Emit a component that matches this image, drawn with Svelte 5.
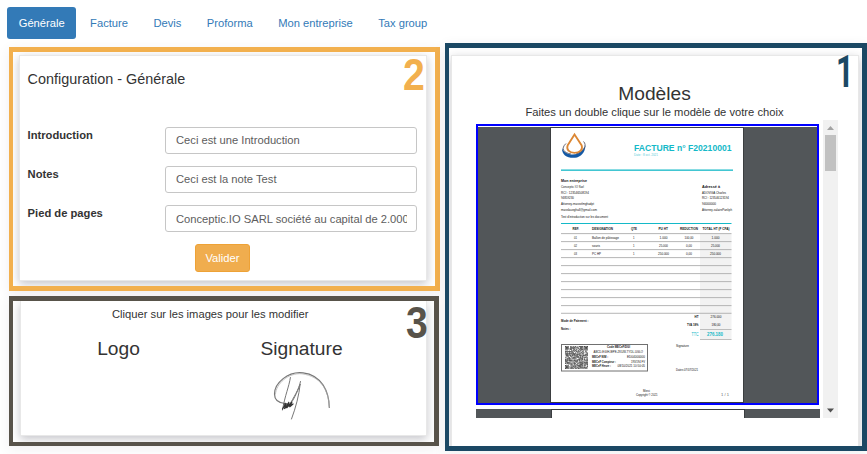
<script>
  const tabs = ['Générale', 'Facture', 'Devis', 'Proforma', 'Mon entreprise', 'Tax group'];
  const fields = [
    { label: 'Introduction', value: 'Ceci est une Introduction' },
    { label: 'Notes', value: 'Ceci est la note Test' },
    { label: 'Pied de pages', value: 'Conceptic.IO SARL société au capital de 2.000' }
  ];

  const teal = '#14b9c8';
  // x, baseline, rendered length, size, text, weight, color
  const texts = [
    [634, 151, 97.5, 9.6, 'FACTURE n° F20210001', 'b', teal],
    [634, 156.3, 24, 3.1, 'Date : 8 oct. 2021', '', '#5ccdd7'],
    [561, 182, 26, 3.9, 'Mon entreprise', 'b'],
    [561, 187.9, 23, 3.4, 'Conceptic IO Sarl'],
    [561, 194, 28, 3.4, 'RCI : 123546508194'],
    [561, 199, 13, 3.4, '94859230'],
    [561, 205.2, 33, 3.4, 'Attorney-masselmghadpt'],
    [561, 211, 36, 3.4, 'masslaueghall@gmail.com'],
    [561, 218, 47, 3.4, "Test d'introduction sur les document"],
    [702, 188, 18, 3.9, 'Adressé à', 'b'],
    [702, 193.5, 24, 3.4, 'ADOVIGA Charles'],
    [702, 199, 27, 3.4, 'RCI : 123546123194'],
    [702, 205.2, 14, 3.4, '94000000'],
    [702, 211, 30, 3.4, 'Attorney-salairePanliph'],
    [572.5, 230.2, 6.5, 3.4, 'REF.', 'b'],
    [592, 230.2, 21, 3.4, 'DESIGNATION', 'b'],
    [631, 230.2, 6, 3.4, 'QTE', 'b'],
    [658.5, 230.2, 9.5, 3.4, 'PU HT', 'b'],
    [680, 230.2, 18, 3.4, 'REDUCTION', 'b'],
    [702.5, 230.2, 27, 3.4, 'TOTAL HT (F CFA)', 'b'],
    [574, 239, 3, 3.2, '01'],
    [592, 239, 27, 3.2, 'Ballon de pâtissage'],
    [633, 239, 1.5, 3.2, '1'],
    [659.5, 239, 8, 3.2, '1.000'],
    [684.5, 239, 9, 3.2, '100,00'],
    [711.5, 239, 8, 3.2, '1.000'],
    [574, 247, 3, 3.2, '02'],
    [592, 247, 8, 3.2, 'souris'],
    [633, 247, 1.5, 3.2, '1'],
    [659, 247, 9, 3.2, '25.000'],
    [686, 247, 6, 3.2, '0,00'],
    [711, 247, 9, 3.2, '25.000'],
    [574, 255, 3, 3.2, '03'],
    [592, 255, 9, 3.2, 'PC HP'],
    [633, 255, 1.5, 3.2, '1'],
    [658, 255, 11, 3.2, '250.000'],
    [686, 255, 6, 3.2, '0,00'],
    [710, 255, 11, 3.2, '250.000'],
    [694.5, 318.1, 4, 3.2, 'HT', 'b'],
    [710.5, 318.1, 11, 3.2, '276.000'],
    [687, 326.1, 11.5, 3.2, 'TVA 18%', 'b'],
    [711.5, 326.1, 9, 3.2, '180,00'],
    [691.5, 336, 7, 4.8, 'TTC', '', teal],
    [707, 336, 16, 4.8, '276.180', 'b', teal],
    [561, 322, 27.5, 3.3, 'Mode de Paiement :', 'b'],
    [561, 330, 9.5, 3.3, 'Notes :', 'b'],
    [607, 348.2, 23, 3.1, 'Code MECeF/DGI', 'b'],
    [593.5, 353.3, 49.5, 3, 'ABCD-EGIH-IEPE-ZKUW-TYDL-UGLO'],
    [592, 358.2, 16, 3.1, 'MECeF NIM :', 'b'],
    [627, 358.2, 18, 3.1, 'ED04000000'],
    [592, 362.8, 24, 3.1, 'MECeF Compteur :', 'b'],
    [631, 362.8, 14, 3.1, '193/194 FV'],
    [592, 367.2, 19, 3.1, 'MECeF Heure :', 'b'],
    [617.5, 367.2, 27.5, 3.1, '08/10/2021 10:50:05'],
    [676, 347, 13, 3.2, 'Signature'],
    [676, 371, 22, 3.2, 'Dates 07/07/2021'],
    [643, 392, 7, 3.2, 'Merci'],
    [636, 396.2, 21.5, 3.2, 'Copyright © 2021'],
    [721, 396.2, 8, 4.3, '1 / 1', '', '#666']
  ];
  const rowLines = Array.from({ length: 10 }, (_, i) => 233.2 + i * 8).concat(312.8);

  // Dense speckle of the QR code
  const N = 41;
  const modules = [];
  let seed = 17;
  for (let r = 0; r < N; r++) {
    for (let c = 0; c < N; c++) {
      seed = (seed * 1103515245 + 12345) % 2147483648;
      const top = r < 8 && (c < 8 || c >= N - 8);
      const bottom = r >= N - 8 && c < 8;
      if (!top && !bottom && seed / 2147483648 > 0.4) modules.push([c, r]);
    }
  }
  const finders = [[0, 0], [N - 7, 0], [0, N - 7]];
</script>

<div class="page">
  <nav>
    {#each tabs as tab, i}
      <a class:active={i === 0} href="#tab{i}">{tab}</a>
    {/each}
  </nav>
  <div class="columns">
    <div class="left">
      <section class="frame general">
        <div class="card">
          <h2>Configuration - Générale</h2>
          <form>
            {#each fields as f}
              <div class="row">
                <span class="label">{f.label}</span>
                <div class="input"><span>{f.value}</span></div>
              </div>
            {/each}
            <button type="button">Valider</button>
          </form>
        </div>
        <b class="num n2">2</b>
      </section>
      <section class="frame images">
        <div class="card">
          <p>Cliquer sur les images pour les modifier</p>
          <div class="pair">
            <div><h3>Logo</h3></div>
            <div>
              <h3>Signature</h3>
              <svg class="sign" width="64" height="54" viewBox="270 367 64 54" fill="none" stroke-linecap="round">
                <path d="M329.300 406.500C329 391 322 374 303 371.800C288 370 274.500 382 274.500 393C274.500 399 279 402 285 402.500" stroke="#777" stroke-width="1.200" />
                <path d="M329.300 406C328.700 389 321 375.500 302 372.800C288 371.500 276 383 275.500 393" stroke="#aaa" stroke-width=".7" />
                <path d="M290.400 376.500C289 386 285 394 282.500 409" stroke="#777" stroke-width="1" />
                <path d="M300.500 380.500C299 389 293 397 289.500 404C293 400 297 392 300.200 383C299 394 296 406 291.500 418" stroke="#777" stroke-width="1" />
                <path d="M282.500 408L286 402L284.500 408L289 401L286.500 407L292 401L289.500 406L293 403M284 403L291 403" stroke="#333" stroke-width="1.200" />
              </svg>
            </div>
          </div>
        </div>
        <b class="num n3">3</b>
      </section>
    </div>
    <section class="frame models">
      <div class="card">
        <h3>Modèles</h3>
        <p>Faites un double clique sur le modèle de votre choix</p>
        <div class="viewer">
          <div class="list">
            <div class="selected">
              <svg width="339" height="276" viewBox="478 127 339 276">
                <rect x="478" y="127" width="339" height="276" fill="#525659" />
                <rect x="550" y="127" width="194" height="276" fill="#3b3e40" />
                <rect x="551" y="128" width="192" height="274" fill="#fff" />
                <path d="M562 148C561.500 156 569 159 577 157.500C583 155.500 585.500 150 585.500 145C583 151.500 578 154.500 573 154.500C567.500 154.500 563.500 152 562 148Z" fill="#1459a5" />
                <path d="M566 143.500C560.500 148.500 563.500 152.800 571 154M583.500 141.500C587.500 145 583.500 152 576 154" fill="none" stroke="#5b5a66" stroke-width=".9" />
                <path d="M574.500 134.500L567.600 145.500C566.300 149.500 569 152.800 574.500 152.800C580 152.800 583 149.500 581.700 145.500Z" fill="#fff" stroke="#dc8734" stroke-width="1.800" />
                <rect x="561" y="169.500" width="172" height="1.300" fill={teal} />
                <rect x="561" y="223" width="170.500" height="1" fill={teal} />
                <rect x="700" y="234" width="31.500" height="106" fill="#f2f2f2" />
                {#each rowLines as y}
                  <rect x="561" {y} width="170.500" height=".9" fill="#adadad" />
                {/each}
                <rect x="700" y="329" width="31.500" height=".8" fill="#b0b0b0" />
                <rect x="700" y="339" width="31.500" height=".8" fill="#b0b0b0" />
                <rect x="561.500" y="344.500" width="86" height="26.500" fill="#fff" stroke="#707070" />
                <g transform="translate(565 346) scale({23 / N})" fill="#111">
                  {#each modules as [x, y]}
                    <rect {x} {y} width="1" height="1" />
                  {/each}
                  {#each finders as [x, y]}
                    <rect x={x + 0.5} y={y + 0.5} width="6" height="6" fill="none" stroke="#222" />
                    <rect x={x + 2} y={y + 2} width="3" height="3" />
                  {/each}
                </g>
                {#each texts as [x, y, len, size, t, w, color]}
                  <text {x} {y} textLength={len} lengthAdjust="spacingAndGlyphs" font-size={size} font-weight={w ? 700 : 400} fill={color ?? '#111'}>{t}</text>
                {/each}
              </svg>
            </div>
            <div class="next"><div class="sheet"></div></div>
          </div>
          <div class="scroll">
            <svg width="15" height="15" viewBox="0 0 15 15"><path d="M4 10L7.500 6L11 10Z" fill="#a3a3a3" /></svg>
            <div class="thumb"></div>
            <svg width="15" height="15" viewBox="0 0 15 15"><path d="M4 5.500L7.500 9.500L11 5.500Z" fill="#505050" /></svg>
          </div>
        </div>
      </div>
      <b class="num n1">1</b>
    </section>
  </div>
</div>

<style>
  :global(body) { background: #fff; }
  * { box-sizing: border-box; }
  .page {
    width: 867px; height: 454px; overflow: hidden;
    font: 11.2px/16px "Liberation Sans", Arial, sans-serif; color: #333;
  }
  nav { display: flex; gap: 2px; height: 43px; padding: 7px 0 0 7px; }
  nav a { height: 32px; padding: 0 11.7px; line-height: 32px; border-radius: 3px; color: #337ab7; text-decoration: none; white-space: nowrap; }
  nav a.active { background: #337ab7; color: #fff; }
  .columns { display: flex; gap: 5px; padding-left: 9px; align-items: flex-start; }
  .left { width: 431px; display: flex; flex-direction: column; gap: 5px; padding-top: 4px; }
  .frame { position: relative; overflow: hidden; border: 5px solid; border-left-width: 4px; box-shadow: 0 3px 12px rgba(60, 50, 80, .08); }
  .card { background: #fff; border: 1px solid #e8e8e8; box-shadow: 0 3px 9px rgba(40, 40, 60, .27); }
  .general { height: 244px; padding: 3px 8px 0 6px; border-color: #f2b04e; }
  .general .card { height: 226px; padding: 15px 9px 0 7.6px; }
  h2 { margin: 0; font-size: 14.4px; line-height: 17px; font-weight: 400; white-space: nowrap; }
  form { display: flex; flex-direction: column; gap: 12px; padding-top: 39px; }
  .row { display: flex; height: 27px; }
  .label { flex: none; width: 137.400px; font-weight: 700; }
  .input { flex: 1; min-width: 0; height: 27px; padding: 0 9px 0 10px; border: 1px solid #c6c6c6; border-radius: 3px; color: #5d5d5d; line-height: 24px; }
  .row:nth-child(3) .input { line-height: 26px; }
  .input span { display: block; overflow: hidden; white-space: nowrap; }
  button { align-self: flex-start; width: 55px; height: 28px; margin-left: 167.400px; padding: 0; font: inherit; color: #fff; background: #f0ad4e; border: 1px solid #eea236; border-radius: 3px; }
  .images { width: 430px; height: 150px; padding: 0 7px 0 7px; border-color: #58534a; border-bottom-width: 4px; }
  .images .card { height: 135px; border-top: 0; }
  p { margin: 0; }
  .images p { padding: 5px 0 0 91px; }
  h3 { margin: 0; font-size: 19.2px; line-height: 22px; font-weight: 400; }
  .pair { display: flex; padding: 16px 33px 0 6px; text-align: center; }
  .pair > div { flex: 1; }
  .sign { display: block; margin: 8px 0 0 60px; }
  .models { width: 422px; height: 408px; padding: 7px 3px 0 2px; border-color: #1b4864; }
  .models .card { height: 410px; padding-top: 26px; display: flex; flex-direction: column; align-items: stretch; text-align: center; }
  .models .card > h3 { padding-top: 1px; height: 22px; padding-right: 1px; }
  .models .card > p { height: 15px; line-height: 17px; padding-right: 1px; }
  .viewer { display: flex; gap: 3px; height: 298px; margin: 1px 0 0 24px; }
  .list { width: 344px; padding-top: 4px; overflow: hidden; }
  .selected { width: 343px; height: 281px; border: 2px solid #00f; padding-top: 1px; }
  .selected svg { display: block; }
  .next { height: 9px; margin-top: 4px; background: #525659; padding-left: 75px; }
  .sheet { width: 194px; height: 9px; background: #fff; border: 1px solid #3b3e40; border-bottom: 0; }
  .scroll { width: 15px; height: 298px; background: #f1f1f1; display: flex; flex-direction: column; align-items: center; }
  .scroll svg { display: block; flex: none; }
  .thumb { width: 11px; height: 36px; margin-bottom: auto; background: #c1c1c1; }
  .num { position: absolute; font: 700 45px/45px "Liberation Sans", Arial, sans-serif; transform-origin: 0 0; transform: scaleX(.87); }
  .n2 { left: 390px; top: 0; color: #f2b04e; }
  .n3 { left: 393px; top: -1px; color: #58534a; }
  .n1 { left: 387px; top: 2px; color: #1b4864; font: 700 44px/44px Roboto, sans-serif; transform: scaleX(.7); }
</style>
